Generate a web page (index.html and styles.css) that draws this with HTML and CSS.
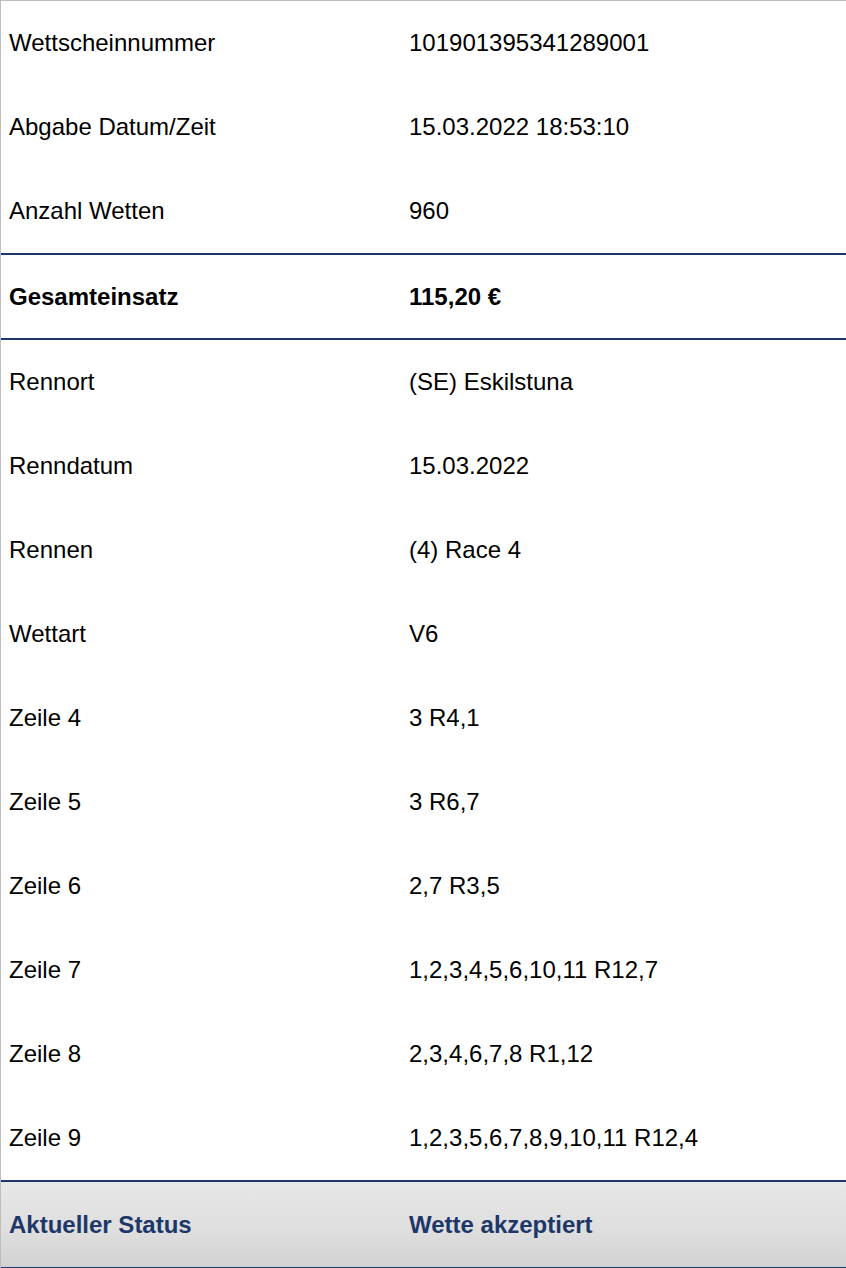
FILE: index.html
```html
<!DOCTYPE html>
<html lang="de">
<head>
<meta charset="utf-8">
<title>Wettschein</title>
<link rel="stylesheet" href="styles.css">
</head>
<body>
<div class="ticket">
  <div class="group">
    <div class="row"><div class="label">Wettscheinnummer</div><div class="value">101901395341289001</div></div>
    <div class="row"><div class="label">Abgabe Datum/Zeit</div><div class="value">15.03.2022 18:53:10</div></div>
    <div class="row"><div class="label">Anzahl Wetten</div><div class="value">960</div></div>
  </div>
  <div class="group total">
    <div class="row"><div class="label">Gesamteinsatz</div><div class="value">115,20 €</div></div>
  </div>
  <div class="group">
    <div class="row"><div class="label">Rennort</div><div class="value">(SE) Eskilstuna</div></div>
    <div class="row"><div class="label">Renndatum</div><div class="value">15.03.2022</div></div>
    <div class="row"><div class="label">Rennen</div><div class="value">(4) Race 4</div></div>
    <div class="row"><div class="label">Wettart</div><div class="value">V6</div></div>
    <div class="row"><div class="label">Zeile 4</div><div class="value">3 R4,1</div></div>
    <div class="row"><div class="label">Zeile 5</div><div class="value">3 R6,7</div></div>
    <div class="row"><div class="label">Zeile 6</div><div class="value">2,7 R3,5</div></div>
    <div class="row"><div class="label">Zeile 7</div><div class="value">1,2,3,4,5,6,10,11 R12,7</div></div>
    <div class="row"><div class="label">Zeile 8</div><div class="value">2,3,4,6,7,8 R1,12</div></div>
    <div class="row"><div class="label">Zeile 9</div><div class="value">1,2,3,5,6,7,8,9,10,11 R12,4</div></div>
  </div>
  <div class="group status">
    <div class="row"><div class="label">Aktueller Status</div><div class="value">Wette akzeptiert</div></div>
  </div>
</div>
</body>
</html>
```
FILE: styles.css
```css
html, body {
  margin: 0;
  padding: 0;
  background: #ffffff;
}
body {
  font-family: "Liberation Sans", Arial, sans-serif;
  font-size: 24px;
  color: #000000;
}
.ticket {
  border-top: 1px solid #bdbdbd;
  border-left: 1px solid #bdbdbd;
  display: flex;
  flex-direction: column;
}
.row {
  display: grid;
  grid-template-columns: 400px 1fr;
  align-items: center;
  height: 84px;
  padding: 0 8px;
}
.group.total {
  border-top: 2px solid #1c3768;
  border-bottom: 2px solid #1c3768;
}
.group.total .row {
  height: 83px;
  font-weight: bold;
}
.group.status {
  border-top: 2px solid #1c3768;
  border-bottom: 2px solid #1c3768;
  background: linear-gradient(to bottom, #e7e7e7 0%, #dedede 60%, #d1d1d1 100%);
}
.group.status .row {
  height: 85px;
  font-weight: bold;
  color: #1c3768;
}
```
